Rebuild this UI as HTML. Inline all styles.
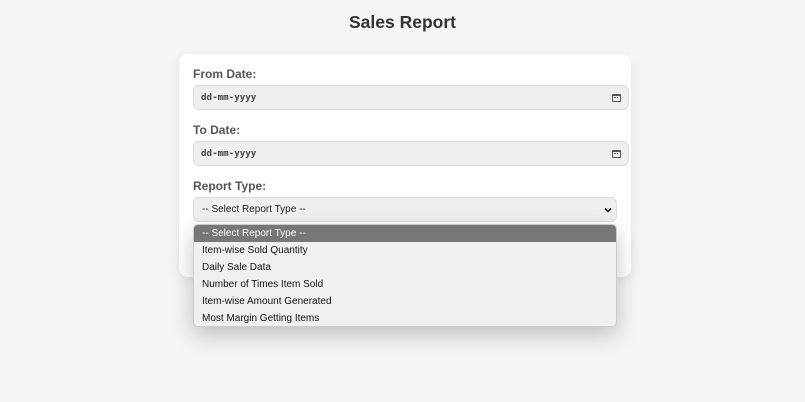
<!DOCTYPE html>
<html><head><meta charset="utf-8"><style>
*{box-sizing:border-box;margin:0;padding:0}
body{width:805px;height:402px;background:#f4f5f7;font-family:"Liberation Sans",sans-serif;position:relative;overflow:hidden}
h1{position:absolute;top:12px;left:0;width:805px;text-align:center;font-size:17.5px;font-weight:bold;color:#333}
.card{position:absolute;left:179px;top:54px;width:452px;height:223px;background:#fff;border-radius:9px;box-shadow:0 3px 12px rgba(0,0,0,0.08)}
.lbl{position:absolute;left:193px;font-size:12px;font-weight:bold;color:#555}
.inp{position:absolute;left:193px;width:436px;height:25px;background:#efefef;border:1px solid #dcdcdc;border-radius:6px;font-family:"DejaVu Sans Mono","Liberation Mono",monospace;font-size:9.2px;font-weight:bold;color:#444;padding-left:7px;line-height:23px}
.ic{position:absolute;right:7px;top:8px;width:9px;height:8px;border:1px solid #555;border-top-width:2px;border-radius:1px}
.ic:after{content:"";position:absolute;left:1px;top:1px;width:4px;height:2px;border-top:1px dotted #555}
.sel{position:absolute;left:193px;top:197px;width:424px;height:25px;background:#efefef;border:1px solid #dcdcdc;border-radius:6px;font-size:10px;color:#222;padding-left:8px;line-height:23px}
.sel svg{position:absolute;right:4px;top:9px}
.dd{position:absolute;left:193px;top:224px;width:424px;height:103px;background:#f0f0f0;border:1px solid #ccc;border-radius:5px;box-shadow:0 8px 22px rgba(0,0,0,0.22);overflow:hidden;font-size:10px;color:#111}
.dd div{height:17px;line-height:17px;padding-left:8px}
.dd .h{background:#777;color:#fff}
</style></head><body>
<h1>Sales Report</h1>
<div class="card"></div>
<div class="lbl" style="top:67px">From Date:</div>
<div class="inp" style="top:85px">dd-mm-yyyy<span class="ic"></span></div>
<div class="lbl" style="top:123px">To Date:</div>
<div class="inp" style="top:141px">dd-mm-yyyy<span class="ic"></span></div>
<div class="lbl" style="top:179px">Report Type:</div>
<div class="sel">-- Select Report Type --<svg width="8" height="6" viewBox="0 0 8 6"><path d="M1 1.5L4 4.5L7 1.5" stroke="#222" stroke-width="1.6" fill="none"/></svg></div>
<div class="dd">
<div class="h">-- Select Report Type --</div>
<div>Item-wise Sold Quantity</div>
<div>Daily Sale Data</div>
<div>Number of Times Item Sold</div>
<div>Item-wise Amount Generated</div>
<div>Most Margin Getting Items</div>
</div>
</body></html>
